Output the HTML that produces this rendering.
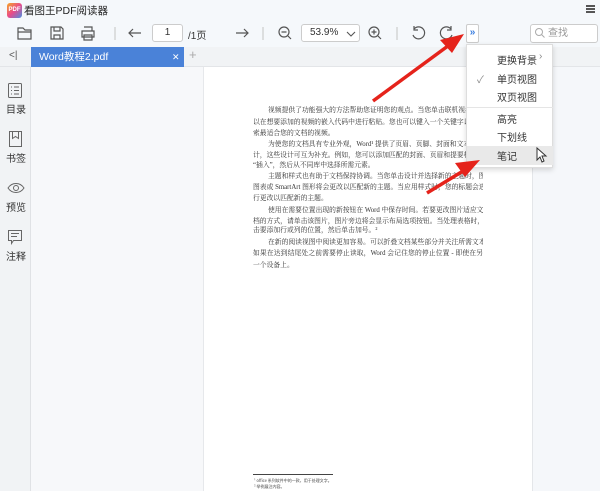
<!DOCTYPE html>
<html><head><meta charset="utf-8"><style>
*{margin:0;padding:0;box-sizing:border-box}
body{width:600px;height:491px;overflow:hidden;background:#f5f7fa;font-family:"Liberation Sans","Noto Sans CJK SC",sans-serif;position:relative;color:#333}
.a{position:absolute}
.t{font-family:"Liberation Serif","Noto Serif CJK SC",serif;font-size:6.8px;color:#333;position:absolute;left:253px;width:230px;white-space:nowrap;text-align:justify;text-align-last:justify;line-height:9px;overflow:hidden}
.t.i{left:268px;width:215px}
.t.l{text-align-last:left}
.mi{position:absolute;left:31px;font-size:10px;color:#333}
svg{position:absolute;overflow:visible}
</style></head><body>
<div class="a" style="left:0;top:0;width:600px;height:22px;background:#f5f8fb"></div>
<div class="a" style="left:7px;top:3px;width:15px;height:15px;border-radius:3px;background:linear-gradient(135deg,#f5a623,#e94b8a,#4a90e2);color:#fff;font-size:6px;font-weight:bold;line-height:15px;text-align:center">PDF</div>
<div class="a" style="left:24px;top:3px;font-size:10.5px;color:#222">看图王PDF阅读器</div>
<div class="a" style="left:586px;top:5px;width:9px;height:1.5px;background:#555;box-shadow:0 3px 0 #555,0 6px 0 #555"></div>
<div class="a" style="left:0;top:22px;width:600px;height:25px;background:#f5f8fb"></div>
<svg width="600" height="60" style="left:0;top:0" fill="none" stroke="#555" stroke-width="1.2">
<path d="M18 28h5l2 2h6v9H18z M18 32h13"/>
<path d="M51 27h10l2 2v10H51z M54 27v4h6v-4 M54 39v-4h6v4"/>
<path d="M84 27h8v4 M82 31h12v6H82z M84 35h8v5h-8z"/>
<path d="M115 27v13M263 27v13M397 27v13" stroke="#ccc"/>
<path d="M129 33h12 M133 29l-4 4 4 4"/>
<path d="M236 33h12 M244 29l4 4-4 4"/>
<circle cx="284" cy="32" r="5"/><path d="M281.5 32h5 M288 36l3 3"/>
<circle cx="374" cy="32" r="5"/><path d="M371.5 32h5 M374 29.5v5 M378 36l3 3"/>
<path d="M414 29a6 6 0 1 1 -1 6 M414 26v4h4" />
<path d="M451 29a6 6 0 1 0 1 6 M451 26v4h-4"/>
</svg>
<div class="a" style="left:152px;top:24px;width:31px;height:18px;border:1px solid #ccc;border-radius:3px;background:#fff;font-size:10px;text-align:center;line-height:16px">1</div>
<div class="a" style="left:188px;top:27px;font-size:10px">/1页</div>
<div class="a" style="left:301px;top:24px;width:59px;height:18px;border:1px solid #ccc;border-radius:3px;background:#fff;font-size:10px;line-height:16px;padding-left:8px">53.9%</div>
<svg width="10" height="6" style="left:346px;top:31px" fill="none" stroke="#555" stroke-width="1.1"><path d="M1 1l4 4 4-4"/></svg>
<div class="a" style="left:466px;top:24px;width:13px;height:19px;border:1px solid #ccc;border-radius:2px;background:#fff;color:#3c7fe0;font-size:10px;line-height:16px;text-align:center;font-weight:bold">»</div>
<div class="a" style="left:530px;top:24px;width:68px;height:19px;border:1px solid #ccc;border-radius:3px;background:#fff;font-size:10px;color:#999;line-height:17px;padding-left:17px">查找</div>
<svg width="10" height="10" style="left:535px;top:28px" fill="none" stroke="#aaa" stroke-width="1"><circle cx="4" cy="4" r="3.5"/><path d="M6.5 6.5l3 3"/></svg>
<div class="a" style="left:0;top:47px;width:600px;height:20px;background:#f1f3f5;border-bottom:1px solid #e3e5e8"></div>
<div class="a" style="left:9px;top:50px;font-size:10px;color:#555">&lt;|</div>
<div class="a" style="left:31px;top:47px;width:153px;height:20px;background:#4a82d8;color:#fff;font-size:10.5px;line-height:20px;padding-left:8px">Word教程2.pdf<span style="position:absolute;left:141px;font-size:9px">✕</span></div>
<div class="a" style="left:189px;top:47px;font-size:13px;color:#aaa">+</div>
<div class="a" style="left:0;top:67px;width:31px;height:424px;background:#f1f3f5;border-right:1px solid #e0e2e5"></div>
<svg width="31" height="200" style="left:0;top:67px" fill="none" stroke="#666" stroke-width="1">
<rect x="8.5" y="16.5" width="13" height="14" rx="1"/><path d="M11 20h1M14 20h5M11 23.5h1M14 23.5h5M11 27h1M14 27h5"/>
<path d="M9.5 64.5h12v15h-12z M12.5 64.5v7l3-2 3 2v-7"/>
<path d="M8 121c4-6 12-6 16 0c-4 6-12 6-16 0z"/><circle cx="16" cy="121" r="2.5"/>
<path d="M8.5 163.5h13v10h-8l-2 3v-3h-3z M11 166.5h8M11 169.5h6"/>
</svg>
<div class="mi" style="left:6px;top:101px">目录</div>
<div class="mi" style="left:6px;top:150px">书签</div>
<div class="mi" style="left:6px;top:199px">预览</div>
<div class="mi" style="left:6px;top:248px">注释</div>
<div class="a" style="left:31px;top:67px;width:173px;height:424px;background:#f7f8fa;border-right:1px solid #e6e8eb"></div>
<div class="a" style="left:204px;top:67px;width:329px;height:424px;background:#fff;border-right:1px solid #e4e6e9"></div>
<div class="t i" style="top:106px">视频提供了功能强大的方法帮助您证明您的观点。当您单击联机视频时，可</div>
<div class="t" style="top:118px">以在想要添加的视频的嵌入代码中进行粘贴。您也可以键入一个关键字以联机搜</div>
<div class="t l" style="top:129px">索最适合您的文档的视频。</div>
<div class="t i" style="top:140px">为使您的文档具有专业外观，Word¹ 提供了页眉、页脚、封面和文本框设</div>
<div class="t" style="top:151px">计，这些设计可互为补充。例如，您可以添加匹配的封面、页眉和提要栏。单击</div>
<div class="t l" style="top:161px">“插入”，然后从不同库中选择所需元素。</div>
<div class="t i" style="top:172px">主题和样式也有助于文档保持协调。当您单击设计并选择新的主题时，图片、</div>
<div class="t" style="top:183px">图表或 SmartArt 图形将会更改以匹配新的主题。当应用样式时，您的标题会进</div>
<div class="t l" style="top:194px">行更改以匹配新的主题。</div>
<div class="t i" style="top:206px">使用在需要位置出现的新按钮在 Word 中保存时间。若要更改图片适应文</div>
<div class="t" style="top:217px">档的方式，请单击该图片，图片旁边将会显示布局选项按钮。当处理表格时，单</div>
<div class="t l" style="top:226px">击要添加行或列的位置，然后单击加号。²</div>
<div class="t i" style="top:238px">在新的阅读视图中阅读更加容易。可以折叠文档某些部分并关注所需文本。</div>
<div class="t" style="top:249px">如果在达到结尾处之前需要停止读取，Word 会记住您的停止位置 - 即使在另</div>
<div class="t l" style="top:261px">一个设备上。</div>
<div class="a" style="left:253px;top:474px;width:80px;height:1px;background:#444"></div>
<div class="a" style="left:254px;top:478px;font-size:4px;color:#444;font-family:'Noto Sans CJK SC',sans-serif;line-height:6px">¹ office 系列软件中的一款，用于处理文字。<br>² 举例展注内容。</div>
<div class="a" style="left:466px;top:44px;width:87px;height:124px;background:#fff;border:1px solid #ddd;box-shadow:0 2px 5px rgba(0,0,0,.15);font-size:10px;color:#333">
<div class="a" style="left:30px;top:7px">更换背景</div>
<div class="a" style="left:72px;top:6px;color:#888">›</div>
<div class="a" style="left:10px;top:26px;color:#888">✓</div>
<div class="a" style="left:30px;top:26px">单页视图</div>
<div class="a" style="left:30px;top:44px">双页视图</div>
<div class="a" style="left:0;top:62px;width:86px;height:1px;background:#e5e5e5"></div>
<div class="a" style="left:30px;top:66px">高亮</div>
<div class="a" style="left:30px;top:84px">下划线</div>
<div class="a" style="left:0;top:101px;width:86px;height:19px;background:#e9e9e9"></div>
<div class="a" style="left:30px;top:103px">笔记</div>
</div>
<svg width="12" height="16" style="left:536px;top:147px"><path d="M1 1v12l3-3 2 5 2-1-2-5h4z" fill="#fff" stroke="#333" stroke-width="1"/></svg>
<svg width="600" height="491" style="left:0;top:0">
<line x1="373" y1="101" x2="452" y2="43" stroke="#e5231b" stroke-width="3.5"/>
<polygon points="464,34 440,40 452,53" fill="#e5231b"/>
<line x1="427" y1="193" x2="468" y2="168" stroke="#e5231b" stroke-width="3.5"/>
<polygon points="480,160 455,163 465,177" fill="#e5231b"/>
</svg>
</body></html>
